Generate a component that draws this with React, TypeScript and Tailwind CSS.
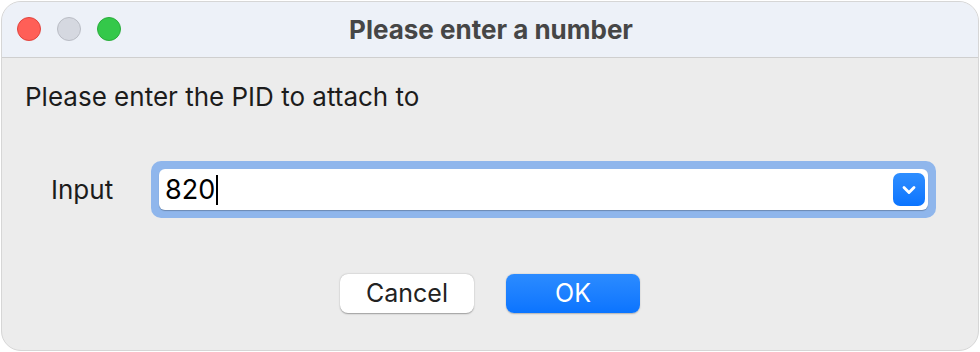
import { ChevronDown } from "lucide-react";

const font = { fontFamily: "Inter, 'Liberation Sans', sans-serif" };

export default function App() {
  return (
    <div className="w-[980px] h-[352px] bg-white p-px" style={font}>
      <div className="h-full flex flex-col rounded-[20px] overflow-hidden bg-[#ececec] border border-[#d6d6d6]">
        {/* title bar */}
        <div className="relative h-[56px] shrink-0 flex items-center justify-center bg-[#edf1f8] border-b border-[#cfcfcf]">
          <div className="absolute left-[15px] top-[15px] flex gap-4">
            <span className="w-6 h-6 rounded-full bg-[#ff5f57] border border-[#e0443e]" />
            <span className="w-6 h-6 rounded-full bg-[#d5d8e0] border border-[#b9bcc4]" />
            <span className="w-6 h-6 rounded-full bg-[#34c84a] border border-[#2aac3c]" />
          </div>
          <span className="text-[26px] font-bold text-[#464646] leading-[32px] pl-[2px]">
            Please enter a number
          </span>
        </div>

        {/* body */}
        <div className="flex-1 flex flex-col">
          <p className="pl-[23px] pt-[23px] text-[26px] text-[#1c1c1c] leading-[32px]">
            Please enter the PID to attach to
          </p>

          <div className="flex items-center mt-[48px] pl-[49px]">
            <span className="w-[100px] text-[26px] text-[#1c1c1c] leading-[32px]">Input</span>
            <div className="w-[785px] h-[57px] rounded-[10px] bg-[#8fb6ec] p-[8px]">
              <div className="h-full rounded-[6px] bg-white shadow-[0_1px_1px_rgba(0,0,0,0.25)] flex items-center pl-[6px] pr-[3px]">
                <span className="text-[27px] text-black leading-none">820</span>
                <span className="w-[2px] h-[30px] bg-black ml-[1px]" />
                <div className="ml-auto w-[32px] h-[33px] rounded-[7px] bg-gradient-to-b from-[#2e8eff] to-[#0a74ff] flex items-center justify-center">
                  <ChevronDown size={20} strokeWidth={3.4} className="text-white" />
                </div>
              </div>
            </div>
          </div>

          <div className="flex justify-center gap-[32px] mt-[56px]">
            <button className="w-[134px] h-[39px] rounded-[8px] bg-white text-[25px] text-[#222] shadow-[0_0.5px_1.5px_rgba(0,0,0,0.35)]">
              Cancel
            </button>
            <button className="w-[134px] h-[39px] rounded-[8px] bg-gradient-to-b from-[#2b8bff] to-[#0a74ff] text-[25px] text-white shadow-[0_0.5px_1.5px_rgba(0,0,0,0.25)]">
              OK
            </button>
          </div>
        </div>
      </div>
    </div>
  );
}
